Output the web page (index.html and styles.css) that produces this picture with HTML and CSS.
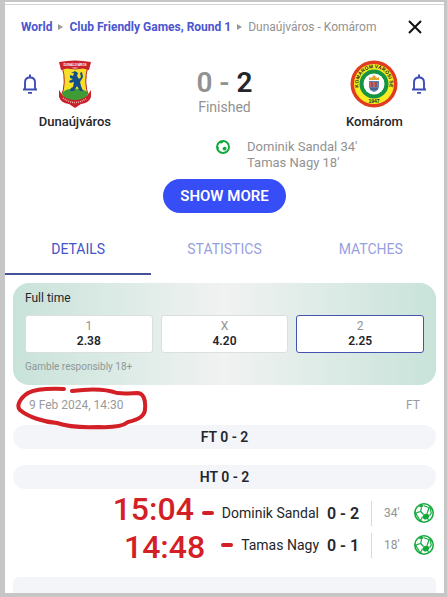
FILE: index.html
```html
<!DOCTYPE html>
<html lang="en">
<head>
<meta charset="utf-8">
<meta name="viewport" content="width=device-width, initial-scale=1">
<title>Dunaújváros - Komárom</title>
<link rel="stylesheet" href="styles.css">
</head>
<body>
<svg class="defs" aria-hidden="true">
  <symbol id="bell" viewBox="0 0 16 20">
    <path d="M3 15V8.500C3 5.500 5 3.500 8 3.500s5 2 5 5V15M1 15.500h14" fill="none" stroke="currentColor" stroke-width="1.900"/>
    <path d="M7 0.500h2v3H7zM6 18h4v1.700H6z" fill="currentColor"/>
  </symbol>
  <symbol id="ball" viewBox="0 0 20 20">
    <circle cx="10" cy="10" r="9.200" fill="#fff" stroke="#12a83c" stroke-width="1.500"/>
    <path d="M9.500 11.500l3.700-1.300 2.400 2.600-1.600 3.500-4 .2-1.600-2.600z" fill="#12a83c"/>
    <path d="M4.500 3.200l3-1.700 2.500 1.300-2.500 1.600zM15.500 3l3 4.500-2-.8-1.500-2zM1 8l1.600 1.500.5 3L1.500 13zM4.500 16l2.800.5 1 2.300-2-.4z" fill="#12a83c"/>
    <path d="M7.500 4.400L6.700 8.500 9.500 11.500M6.700 8.500L2.600 9.700M10 2.800l4.800 1.700M15 4.700l-1.800 5.500M16.500 6.700l.7 3.300-1.600 2.800M3.100 12.500l2.200 3.700M8.400 14.100l-1.100 2.400M14 16.300l1 1.200" fill="none" stroke="#12a83c" stroke-width="1.200"/>
  </symbol>
  <symbol id="ball-small" viewBox="0 0 14 14">
    <circle cx="7" cy="7" r="6" fill="#fff" stroke="#12a83c" stroke-width="1.900"/>
    <path d="M7 7.500l2-1 1.700 1.500-.8 2.200-2.200.2-1.200-1.400z" fill="#12a83c"/>
    <path d="M3.500 2.200l3-1L7.200 2.500 5 3.800zM1.300 6l1.500 1v2L1.500 9.500z" fill="#12a83c"/>
  </symbol>
</svg>
<main class="panel">
  <header class="topbar">
    <nav class="crumbs" aria-label="Breadcrumb">
      <a href="#">World</a><i class="arrow"></i><a href="#">Club Friendly Games, Round 1</a><i class="arrow"></i><span>Dunaújváros - Komárom</span>
    </nav>
    <button class="close" aria-label="Close"><svg viewBox="0 0 14 14"><path d="M1 1l12 12M13 1L1 13" stroke="#111" stroke-width="2"/></svg></button>
  </header>

  <section class="match">
    <div class="team home">
      <button class="bell" aria-label="Follow Dunaújváros"><svg viewBox="0 0 16 20"><use href="#bell"/></svg></button>
      <svg class="crest" viewBox="0 0 48 48" aria-hidden="true">
        <path d="M11 6Q24 12 37 6Q32 23 38 37Q31 41 24 46Q17 41 10 37Q16 23 11 6z" fill="#f5df28" stroke="#b81f2b"/>
        <path d="M11 33q5-5 13-4 8-1 13 4l-2 6q-11 7-22 0z" fill="#3e9b35"/>
        <path d="M20 13l4-2 3 2-1 3 2 3 2-2-1-4 2-1 1 5-3 5 1 4 2 5h-3l-3-5-3 5h-4l1-3 2-1 1-5-4 1-1-2 4-2-3-1v-3l3 1 1-3z" fill="#124e87"/>
        <path d="M8 2Q24-1 40 2L38 10Q24 5 10 10z" fill="#c9202c"/>
        <path d="M8 30l4 6q5 4 12 4t12-4l4-6v7q-2 6-10 7l-6 4-6-4q-8-1-10-7z" fill="#c9202c"/>
        <path d="M12 38q12 9 24 0" fill="none" stroke="#efb6ad" stroke-width="1.500" stroke-dasharray="1 1"/>
        <text x="24" y="5.500" class="crest-text light">DUNAÚJVÁROS</text>
      </svg>
      <strong class="name">Dunaújváros</strong>
    </div>
    <div class="result">
      <div class="score"><span>0 -</span> 2</div>
      <div class="status">Finished</div>
    </div>
    <div class="team away">
      <svg class="crest" viewBox="0 0 48 48" aria-hidden="true">
        <circle cx="24" cy="24" r="23.500" fill="#e13b20"/>
        <circle cx="24" cy="24" r="20" fill="#f7ed20"/>
        <circle cx="24" cy="24" r="14.500" fill="#149444"/>
        <circle cx="24" cy="24" r="10.500" fill="#fff"/>
        <path d="M19 21h10v6q-1 4-5 5-4-1-5-5z" fill="#5b7fae"/>
        <path d="M20 22h8v5h-8z" fill="#d1605c"/>
        <path d="M19 20v-3l2 1 3-3 3 3 2-1v3z" fill="#e5a529"/>
        <path d="M20 29h8M22 22v5M26 22v5" stroke="#394c76"/>
        <path id="arc" d="M10 31A15.700 15.700 0 1 1 38 31" fill="none"/>
        <text class="crest-text ring"><textPath href="#arc" startOffset="50%">KOMÁROM VÁROSI SE</textPath></text>
        <text x="24" y="43" class="crest-text year">1947</text>
      </svg>
      <button class="bell" aria-label="Follow Komárom"><svg viewBox="0 0 16 20"><use href="#bell"/></svg></button>
      <strong class="name">Komárom</strong>
    </div>
  </section>

  <section class="scorers">
    <svg class="ball" viewBox="0 0 14 14" aria-hidden="true"><use href="#ball-small"/></svg>
    <div>Dominik Sandal 34'<br>Tamas Nagy 18'</div>
  </section>
  <button class="more">SHOW MORE</button>

  <nav class="tabs">
    <a href="#" class="active">DETAILS</a>
    <a href="#">STATISTICS</a>
    <a href="#">MATCHES</a>
  </nav>

  <section class="odds">
    <h2>Full time</h2>
    <div class="prices">
      <button><span>1</span><b>2.38</b></button>
      <button><span>X</span><b>4.20</b></button>
      <button class="won"><span>2</span><b>2.25</b></button>
    </div>
    <p>Gamble responsibly 18+</p>
  </section>

  <div class="date">
    <time datetime="2024-02-09T14:30">9 Feb 2024, 14:30</time><span>FT</span>
    <svg class="circle" viewBox="0 0 132 46" aria-hidden="true"><path d="M48 4Q21 3 12 8C4 13 0 21 4 25C12 32 28 37 41 38Q55 43 82 42Q105 43 112 37C126 34 129 29 129 24C130 14 127 8 121 8C110 9 106 8 101 8Q85 2 56 6"/><path class="gap" d="M51 1l2 8"/></svg>
  </div>

  <h3 class="period">FT 0 - 2</h3>
  <h3 class="period">HT 0 - 2</h3>
  <ul class="events">
    <li>
      <span class="note first"><span>15:04</span><i class="dash"></i></span>
      <span class="player">Dominik Sandal</span><b>0 - 2</b><span class="minute">34'</span>
      <svg class="goal" viewBox="0 0 20 20" aria-hidden="true"><use href="#ball"/></svg>
    </li>
    <li>
      <span class="note second"><span>14:48</span><i class="dash"></i></span>
      <span class="player">Tamas Nagy</span><b>0 - 1</b><span class="minute">18'</span>
      <svg class="goal" viewBox="0 0 20 20" aria-hidden="true"><use href="#ball"/></svg>
    </li>
  </ul>
  <div class="next"></div>
</main>
</body>
</html>
```
FILE: styles.css
```css
* { box-sizing: border-box; }
body {
  margin: 0;
  min-height: 100vh;
  display: flex;
  padding: 2px 3px 4px 5px;
  background: #c6c6c6;
  color: #24262b;
  font-family: Roboto, "Liberation Sans", sans-serif;
  font-size: 12px;
}
button { font: inherit; color: inherit; cursor: pointer; }
a { text-decoration: none; }
.defs { position: absolute; width: 0; height: 0; }
.panel {
  flex: 1;
  min-width: 0;
  display: flex;
  flex-direction: column;
  padding: 2px 8px 0;
  background: #fff;
}
.topbar {
  display: flex;
  align-items: center;
  justify-content: space-between;
  height: 44px;
  margin: 0 -8px;
  padding: 0 22px 0 16px;
  border-top: 1px solid #d4d4d4;
}
.crumbs { display: flex; align-items: center; white-space: nowrap; color: #929292; }
.crumbs a { color: #4b55cf; font-weight: 700; }
.arrow {
  margin: 0 6px;
  border: solid transparent;
  border-width: 3px 0 3px 5px;
  border-left-color: #999;
}
.close { width: 14px; height: 14px; padding: 0; border: 0; background: none; }
.close svg { display: block; }
.match { display: flex; justify-content: space-between; padding: 12px 0 0; }
.team { display: grid; align-items: center; justify-items: center; row-gap: 6px; }
.home { grid-template-columns: 34px 56px; }
.away { grid-template-columns: 56px 34px; }
.team .crest { width: 48px; height: 48px; }
.bell { padding: 0; border: 0; background: none; color: #3c4cb4; }
.bell svg { display: block; width: 16px; height: 20px; }
.name { grid-column: 1 / 3; font-size: 13px; line-height: 16px; font-weight: 500; }
.home .name { justify-self: end; margin-right: -8px; }
.away .name { justify-self: start; }
.crest-text { font-family: "Liberation Sans", sans-serif; font-weight: bold; text-anchor: middle; }
.light { font-size: 3px; fill: #fff; }
.ring { font-size: 5px; fill: #222; }
.year { font-size: 5px; fill: #222; }
.result { padding-top: 7px; text-align: center; }
.score { font-size: 28px; line-height: 32px; font-weight: 600; }
.score span { color: #929292; }
.status { font-size: 14px; line-height: 16px; color: #929292; }
.scorers {
  display: flex;
  gap: 17px;
  margin: 9px 0 8px 48%;
  line-height: 16px;
  font-size: 13px;
  color: #929292;
}
.ball { width: 14px; height: 14px; margin-top: 1px; }
.more {
  align-self: center;
  height: 34px;
  padding: 0 17px;
  border: 0;
  border-radius: 17px;
  background: #374df5;
  color: #fff;
  font-size: 15px;
  font-weight: 600;
}
.tabs { display: flex; margin: 12px -8px 8px; }
.tabs a {
  flex: 1;
  height: 50px;
  line-height: 48px;
  border-bottom: 2px solid transparent;
  text-align: center;
  font-size: 14px;
  color: #989fe0;
}
.tabs .active { color: #4552c8; border-color: #445398; }
.odds {
  padding: 7px 12px 11px;
  border-radius: 16px;
  background: linear-gradient(90deg, #c8e3d9, #f1f2f2 50%, #c8e3d9);
}
.odds h2 { margin: 0 0 9px; font-size: 12px; line-height: 16px; font-weight: 400; }
.prices { display: flex; gap: 8px; }
.prices button {
  flex: 1;
  height: 38px;
  padding: 2px 0;
  border: 1px solid #dcdfdf;
  border-radius: 3px;
  background: #fff;
  line-height: 15px;
}
.prices .won { border-color: #4552b0; }
.prices span, .prices b { display: block; }
.prices span { color: #929292; }
.prices b { font-weight: 600; font-size: 12px; }
.odds p { margin: 7px 0 0; font-size: 10px; line-height: 14px; color: #8e9896; }
.date {
  position: relative;
  display: flex;
  justify-content: space-between;
  padding: 12px 16px 11px;
  line-height: 17px;
  color: #9a9a9a;
}
.circle { position: absolute; left: 3px; top: 0; width: 132px; height: 46px; }
.circle path { fill: none; stroke: #d32026; stroke-width: 4; stroke-linecap: round; }
.circle .gap { stroke: #fff; stroke-width: 3; }
.period {
  margin: 0 0 16px;
  border-radius: 12px;
  background: #f3f5f9;
  text-align: center;
  font-size: 14px;
  line-height: 24px;
  font-weight: 600;
}
.period + .events { margin: -8px 0 16px; padding: 0; list-style: none; }
.events li {
  display: flex;
  align-items: center;
  justify-content: flex-end;
  height: 32px;
  padding-right: 2px;
  white-space: nowrap;
}
.events b { width: 52px; padding-left: 8px; font-size: 16px; font-weight: 600; }
.player { font-size: 14px; }
.minute {
  width: 43px;
  padding-left: 12px;
  border-left: 1px solid #d6d8dc;
  line-height: 25px;
  color: #929292;
}
.goal { width: 20px; height: 20px; }
.note { display: flex; align-items: center; color: #d32026; font-weight: 500; line-height: 32px; font-size: 32px; }
.first { gap: 8px; margin-right: 8px; }
.first span { margin-bottom: 8px; }
.second { gap: 16px; margin-right: 8px; }
.second span { margin-top: 4px; }
.dash { width: 12px; height: 4px; border-radius: 2px; background: #d32026; }
.next { flex: 1; min-height: 16px; border-radius: 6px 6px 0 0; background: #f3f5f9; }
```
